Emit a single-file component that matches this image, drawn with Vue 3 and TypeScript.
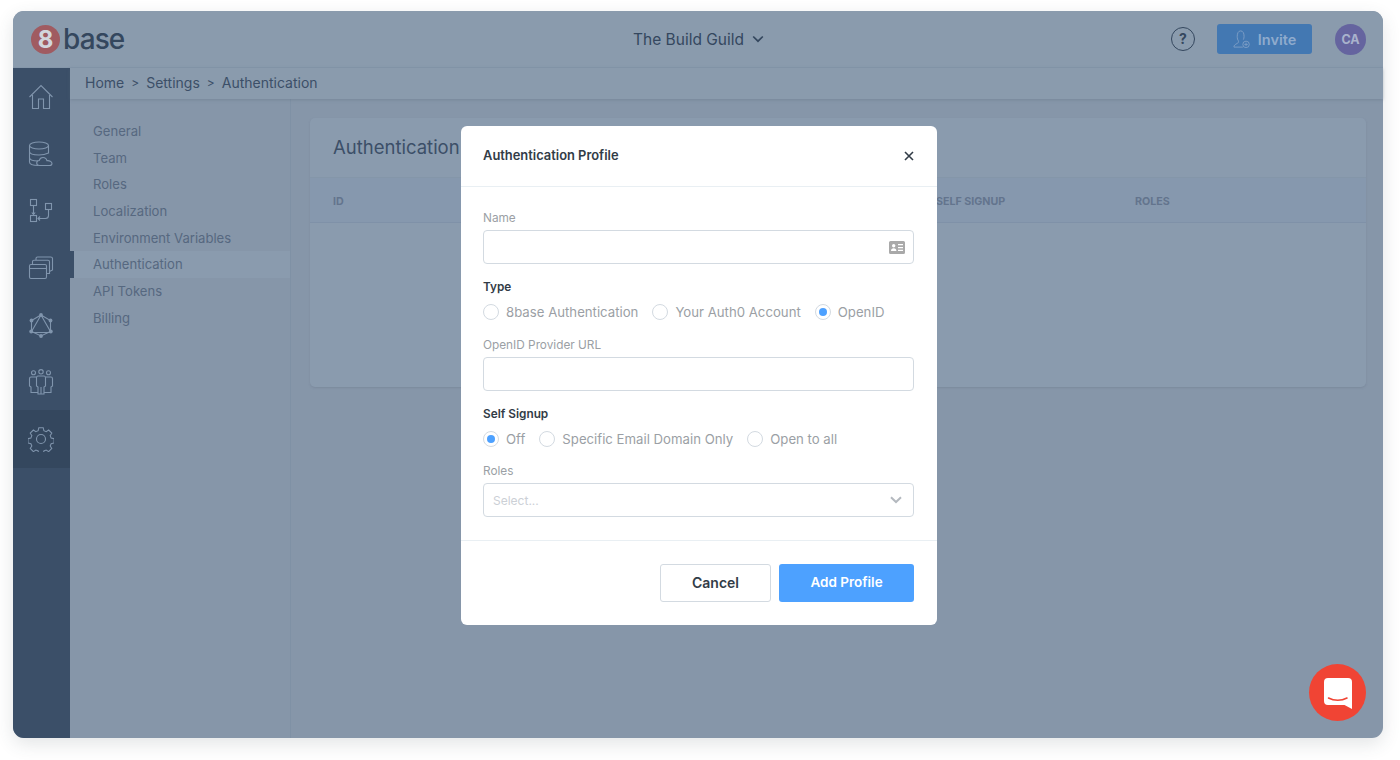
<script setup lang="ts">
const navItems: string[] = ['General', 'Team', 'Roles', 'Localization', 'Environment Variables', 'Authentication', 'API Tokens', 'Billing']
const columns: string[] = ['ID', 'NAME', 'SELF SIGNUP', 'ROLES']
const typeOptions = [
  { label: '8base Authentication', on: false },
  { label: 'Your Auth0 Account', on: false },
  { label: 'OpenID', on: true },
]
const signupOptions = [
  { label: 'Off', on: true },
  { label: 'Specific Email Domain Only', on: false },
  { label: 'Open to all', on: false },
]
</script>

<template>
  <div class="page">
    <div class="window">
      <header class="topbar">
        <div class="logo">
          <span class="logo-mark">8</span>
          <span class="logo-word">base</span>
        </div>
        <div class="org">
          <span>The Build Guild</span>
          <svg width="12" height="8" viewBox="0 0 12 8" fill="none" stroke="#34475e" stroke-width="1.7"><path d="M1.2 1.5 6 6.2l4.8-4.7" /></svg>
        </div>
        <div class="top-actions">
          <span class="help">?</span>
          <button class="invite">
            <svg width="18" height="20" viewBox="0 0 20 22" fill="none" stroke="#7f9fc6" stroke-width="1"><path d="M1 20c0-2 1.500-3 3.500-4 1.500-.8 2-1.500 1.500-3-.8-1-1.300-2.500-1.300-5C4.700 4.500 6 2 8.500 2s3.800 2.500 3.800 6c0 1.500-.3 2.700-.8 3.700" /><path d="M1 20h10" /><circle cx="14.500" cy="17" r="3.600" /><path d="M14.500 15v4M12.500 17h4" /></svg>
            <span>Invite</span>
          </button>
          <span class="avatar">CA</span>
        </div>
      </header>

      <div class="body">
        <aside class="rail">
          <div class="rail-item">
            <svg width="26" height="26" viewBox="0 0 26 26"><path d="M1.500 13 13 1.500 24.500 13M4.500 11v13.500h6V15h5v9.500h6V11" /></svg>
          </div>
          <div class="rail-item">
            <svg width="26" height="26" viewBox="0 0 26 26"><ellipse cx="11" cy="4.500" rx="9.500" ry="3.500" /><path d="M1.500 4.500v16.500c0 2 3.500 3.500 9 3.500M20.500 4.500v8M1.500 10.500c0 2 4 3.500 9.500 3.500 3.500 0 7-.8 9.500-2M1.500 16.500c0 2 3.500 3.500 8.500 3.500" /><path d="M11.500 24.500c-2 0-2.800-1.300-2.800-2.500 0-1.400 1.200-2.500 2.500-2.500.5-2 2-3 3.800-3 2 0 3.500 1.300 3.900 3.200 2.200-.4 5.100.7 5.100 2.800 0 1.200-1 2-2.500 2z" /></svg>
          </div>
          <div class="rail-item">
            <svg width="26" height="26" viewBox="0 0 26 26"><rect x="2.500" y="1.500" width="6" height="6" /><rect x="2.500" y="17.500" width="6" height="6" /><rect x="17.500" y="5.500" width="6" height="6" /><path d="M5.500 7.500v9M3.800 14.500l1.700 2 1.700-2M20.500 11.500v6c0 2-1 3-3 3H10M12 18.500l-2 2 2 2" /></svg>
          </div>
          <div class="rail-item">
            <svg width="26" height="26" viewBox="0 0 26 26"><rect x="1.500" y="9.500" width="17" height="14" rx="1.500" /><path d="M1.500 13.500h17M4.500 9V6.800c0-1 .6-1.600 1.500-1.600h14c1 0 1.500.6 1.500 1.600v11.700h-3M8 5V3.500C8 2.500 8.600 2 9.500 2h13.200c1 0 1.800.6 1.800 1.600V15l-3 1.500" /></svg>
          </div>
          <div class="rail-item">
            <svg width="26" height="26" viewBox="0 0 26 26"><path d="M13 3 23 20.500H3zM13 3l9.500 5.500v11L13 24 3.500 19.500v-11z" /><g class="dots"><circle cx="13" cy="3" r="1.900" /><circle cx="22.500" cy="8.500" r="1.900" /><circle cx="22.800" cy="19.500" r="1.900" /><circle cx="13" cy="24" r="1.900" /><circle cx="3.200" cy="19.500" r="1.900" /><circle cx="3.500" cy="8.500" r="1.900" /></g></svg>
          </div>
          <div class="rail-item">
            <svg width="26" height="26" viewBox="0 0 26 26"><circle cx="13" cy="2.800" r="2.200" /><circle cx="5.500" cy="3.800" r="2" /><circle cx="20.500" cy="3.800" r="2" /><path d="M10 7h6c1 0 1.500.8 1.500 1.800V17l-1.500 1v7h-6v-7l-1.500-1V8.800c0-1 .5-1.800 1.500-1.800zM13 18v7M8 8H3c-1 0-1.500.8-1.500 1.800V17L3 18v5.500h7M18 8h5c1 0 1.500.8 1.500 1.800V17L23 18v5.500h-7" /></svg>
          </div>
          <div class="rail-item active">
            <svg width="26" height="26" viewBox="0 0 26 26"><circle cx="13" cy="13" r="4.500" /><path d="M10.700 1.200h4.600l.7 3.100 2.400 1 2.600-1.700 3.300 3.300-1.700 2.600 1 2.400 3.100.7v4.600l-3.100.7-1 2.400 1.700 2.600-3.300 3.300-2.600-1.700-2.400 1-.7 3.100h-4.600l-.7-3.100-2.400-1-2.600 1.700-3.300-3.300 1.700-2.600-1-2.400-3.100-.7v-4.600l3.100-.7 1-2.400-1.700-2.600 3.300-3.300 2.600 1.700 2.400-1z" transform="translate(.6 .6) scale(.955)" /></svg>
          </div>
        </aside>

        <div class="main">
          <nav class="crumbs">
            <span>Home</span><i>&gt;</i><span>Settings</span><i>&gt;</i><span>Authentication</span>
          </nav>
          <div class="columns">
            <ul class="side-nav">
              <li v-for="item in navItems" :key="item" :class="{ current: item === 'Authentication' }">{{ item }}</li>
            </ul>
            <section class="content">
              <div class="panel">
                <h2 class="panel-title">Authentication</h2>
                <div class="thead">
                  <span v-for="col in columns" :key="col">{{ col }}</span>
                </div>
              </div>
            </section>
          </div>
        </div>
      </div>

      <div class="modal">
        <div class="modal-head">
          <h3>Authentication Profile</h3>
          <svg width="10" height="10" viewBox="0 0 10 10" stroke="#323c47" stroke-width="1.600" fill="none"><path d="M1 1l8 8M9 1 1 9" /></svg>
        </div>
        <div class="modal-body">
          <label class="field-label first">Name</label>
          <div class="input">
            <svg class="card-icon" width="16" height="13" viewBox="0 0 16 13"><path fill="#a9a9a9" fill-rule="evenodd" d="M1.500 0h13A1.500 1.500 0 0 1 16 1.500v10a1.500 1.500 0 0 1-1.500 1.500h-13A1.500 1.500 0 0 1 0 11.500v-10A1.500 1.500 0 0 1 1.500 0zM4.700 3a1.700 1.700 0 1 0 0 3.400 1.700 1.700 0 0 0 0-3.400zM2 10h5.400c0-1.800-1-2.800-2.700-2.800S2 8.200 2 10zm7-7v1.300h5V3zm0 2.900v1.300h5V5.900zm0 2.900v1.300h5V8.800z" /></svg>
          </div>
          <div class="group-label">Type</div>
          <div class="radios">
            <span v-for="o in typeOptions" :key="o.label" class="radio-opt">
              <span class="radio" :class="{ on: o.on }"></span>{{ o.label }}
            </span>
          </div>
          <label class="field-label">OpenID Provider URL</label>
          <div class="input"></div>
          <div class="group-label">Self Signup</div>
          <div class="radios">
            <span v-for="o in signupOptions" :key="o.label" class="radio-opt">
              <span class="radio" :class="{ on: o.on }"></span>{{ o.label }}
            </span>
          </div>
          <label class="field-label last">Roles</label>
          <div class="input select">
            <span>Select...</span>
            <svg width="12" height="8" viewBox="0 0 12 8" fill="none" stroke="#b4b9bf" stroke-width="2"><path d="M1 1.200 6 6l5-4.800" /></svg>
          </div>
        </div>
        <div class="modal-foot">
          <button class="btn ghost">Cancel</button>
          <button class="btn primary">Add Profile</button>
        </div>
      </div>

      <div class="chat">
        <svg width="28" height="31" viewBox="0 0 28 31"><path fill="#fff" d="M4 0h20a4 4 0 0 1 4 4v27l-7.500-4H4a4 4 0 0 1-4-4V4a4 4 0 0 1 4-4z" /><path fill="none" stroke="#f04434" stroke-width="1.600" stroke-linecap="round" d="M4.500 20c5.500 2.800 13 2.800 18.500 0" /></svg>
      </div>
    </div>
  </div>
</template>

<style>
html, body { margin: 0; background: #fff; }
</style>

<style scoped>
* { box-sizing: border-box; }
.page {
  width: 1400px;
  height: 760px;
  padding: 11px 17px 22px 13px;
  font-family: "Inter", "Noto Sans", sans-serif;
  background: #fff;
  overflow: hidden;
}
.window {
  position: relative;
  width: 1370px;
  height: 727px;
  display: flex;
  flex-direction: column;
  border-radius: 11px;
  background: #8696a9;
  box-shadow: 0 6px 18px rgba(60, 70, 80, 0.14);
}
.topbar {
  height: 57px;
  flex: none;
  display: grid;
  grid-template-columns: 1fr auto 1fr;
  align-items: center;
  background: #8a9bad;
  border-bottom: 1px solid #8496a9;
  border-radius: 11px 11px 0 0;
  padding: 0 17px 0 18px;
}
.logo { display: flex; align-items: center; gap: 3px; }
.logo-mark {
  width: 29px;
  height: 29px;
  border-radius: 50%;
  background: #a05b61;
  color: #d2d6dc;
  font-size: 24px;
  font-weight: 700;
  line-height: 29px;
  text-align: center;
}
.logo-word {
  font-size: 28px;
  font-weight: 500;
  letter-spacing: -0.9px;
  color: #34475e;
  line-height: 29px;
}
.org {
  display: flex;
  align-items: center;
  gap: 8px;
  font-size: 15.500px;
  color: #34475e;
}
.top-actions { display: flex; align-items: center; justify-content: flex-end; }
.help {
  width: 24px;
  height: 24px;
  border: 1.300px solid #34475e;
  border-radius: 50%;
  color: #34475e;
  font-size: 14px;
  font-weight: 700;
  line-height: 21px;
  text-align: center;
  margin-right: 22px;
}
.invite {
  width: 95px;
  height: 30px;
  border: 0;
  border-radius: 3px;
  background: #4378b2;
  color: #8fabcd;
  font-family: inherit;
  font-size: 14.500px;
  font-weight: 600;
  display: flex;
  align-items: center;
  justify-content: center;
  gap: 7px;
  padding: 0;
  margin-right: 23px;
}
.avatar {
  width: 31px;
  height: 31px;
  border-radius: 50%;
  background: #65649f;
  color: #a9b2cc;
  font-size: 12.500px;
  font-weight: 700;
  line-height: 31px;
  text-align: center;
}
.body { flex: 1; display: flex; min-height: 0; }
.rail {
  width: 57px;
  flex: none;
  background: #3b4f68;
  border-radius: 0 0 0 11px;
  display: flex;
  flex-direction: column;
}
.rail-item {
  height: 57px;
  flex: none;
  display: flex;
  align-items: center;
  justify-content: center;
  padding-right: 1px;
}
.rail-item.active { background: #34475e; height: 58px; }
.rail-item svg { fill: none; stroke: #8095ad; stroke-width: 1.100; }
.rail-item .dots { fill: #8095ad; stroke: none; }
.main { flex: 1; display: flex; flex-direction: column; min-width: 0; }
.crumbs {
  height: 31px;
  flex: none;
  display: flex;
  align-items: center;
  padding: 0 0 2px 15px;
  background: #8a9bad;
  box-shadow: 0 1px 3px rgba(90, 105, 125, 0.35);
  font-size: 14px;
  color: #3c4f68;
  position: relative;
}
.crumbs i { font-style: normal; font-size: 12px; margin: 0 7px; }
.columns { flex: 1; display: flex; min-height: 0; }
.side-nav {
  width: 221px;
  flex: none;
  list-style: none;
  margin: 0;
  padding: 19px 0 0;
  border-right: 1px solid #7f91a5;
}
.side-nav li {
  height: 26.700px;
  padding-left: 23px;
  font-size: 13.100px;
  line-height: 26px;
  color: #566880;
}
.side-nav li.current {
  background: #8a9bae;
  padding-left: 19px;
  border-left: 4px solid #3b4f68;
}
.content { flex: 1; padding: 19px 17px 0 19px; min-width: 0; }
.panel {
  height: 269px;
  border-radius: 5px;
  background: #8a9bae;
  box-shadow: 0 1px 2px rgba(90, 105, 125, 0.25);
  overflow: hidden;
}
.panel-title {
  margin: 0;
  height: 60px;
  padding-left: 23px;
  font-size: 18.500px;
  font-weight: 400;
  line-height: 58px;
  white-space: nowrap;
  color: #3c4f68;
  border-bottom: 1px solid #8496a9;
}
.thead {
  height: 45px;
  display: grid;
  grid-template-columns: 200px 403px 199px 1fr;
  align-items: center;
  padding: 2px 0 0 23px;
  background: #8698ae;
  border-bottom: 1px solid #7f91a8;
  font-size: 10.700px;
  font-weight: 700;
  color: #63748d;
}
.modal {
  position: absolute;
  left: 448px;
  top: 115px;
  width: 476px;
  height: 499px;
  background: #fff;
  border-radius: 6px;
  display: flex;
  flex-direction: column;
}
.modal-head {
  height: 61px;
  flex: none;
  display: flex;
  align-items: center;
  justify-content: space-between;
  padding: 0 23px 1px 22px;
  border-bottom: 1px solid #e9eff3;
}
.modal-head h3 {
  margin: 0;
  font-size: 12.900px;
  font-weight: 600;
  color: #323c47;
}
.modal-body { flex: 1; padding: 0 23px 0 22px; }
.field-label {
  display: block;
  height: 19px;
  margin: 12px 0 2px;
  font-size: 11.800px;
  line-height: 19px;
  color: #9b9fa5;
}
.field-label.first { margin-top: 22px; }
.field-label.last { margin-top: 11px; }
.input {
  position: relative;
  height: 34px;
  border: 1px solid #d3dae1;
  border-radius: 4px;
  display: flex;
  align-items: center;
  justify-content: flex-end;
  padding: 0 8px;
}
.select { justify-content: space-between; padding: 0 11px 0 9px; font-size: 12px; color: #ccd0d6; }
.group-label {
  height: 18px;
  margin-top: 14px;
  font-size: 11.800px;
  font-weight: 600;
  line-height: 18px;
  color: #323c47;
}
.radios {
  margin-top: 4px;
  height: 24px;
  display: flex;
  align-items: center;
  gap: 14px;
  font-size: 13.200px;
  color: #9b9fa5;
}
.radio-opt { display: flex; align-items: center; gap: 7px; white-space: nowrap; }
.radio {
  width: 16px;
  height: 16px;
  border: 1px solid #d3dae1;
  border-radius: 50%;
  display: flex;
  align-items: center;
  justify-content: center;
}
.radio.on::after {
  content: "";
  width: 8px;
  height: 8px;
  border-radius: 50%;
  background: #4da1ff;
}
.modal-foot {
  height: 85px;
  flex: none;
  border-top: 1px solid #e9eff3;
  display: flex;
  justify-content: flex-end;
  align-items: center;
  gap: 8px;
  padding: 0 23px;
}
.btn {
  height: 38px;
  border-radius: 3px;
  font-family: inherit;
  font-size: 13.500px;
  font-weight: 600;
  padding: 0 0 2px;
}
.ghost { width: 111px; background: #fff; border: 1px solid #d3dae1; color: #323c47; font-size: 14px; }
.primary { width: 135px; background: #4da1ff; border: 0; color: #fff; }
.chat {
  position: absolute;
  right: 17px;
  bottom: 17px;
  width: 57px;
  height: 57px;
  border-radius: 50%;
  background: #f04434;
  display: flex;
  align-items: center;
  justify-content: center;
  padding-top: 1px;
}
</style>
